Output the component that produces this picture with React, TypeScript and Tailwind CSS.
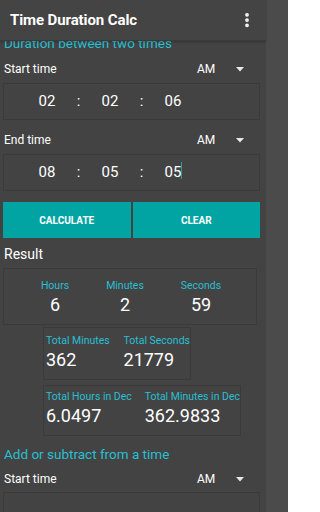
import { EllipsisVertical } from "lucide-react";

const cyan = "text-[#29bfd2]";

const Caret = () => (
  <svg width="8" height="5" viewBox="0 0 8 5" className="block">
    <path d="M0 0 H8 L4 4.5 Z" fill="#e8e8e8" />
  </svg>
);

const LabelRow = ({ label, className = "" }: { label: string; className?: string }) => (
  <div className={`flex items-center h-[14px] ${className}`}>
    <span className="pl-[1px] text-[12px] leading-[14px] text-white flex-1">{label}</span>
    <span className="w-[38px] text-[12px] leading-[14px] text-white">AM</span>
    <span className="w-[28px] pl-[1px]">
      <Caret />
    </span>
  </div>
);

const TimeBox = ({ h, m, s, cursor = false }: { h: string; m: string; s: string; cursor?: boolean }) => (
  <div className="h-[37px] w-[257px] border border-[#3a3a3a] flex items-center pl-[27px] text-[15px] text-white">
    <span className="w-[32px] text-center">{h}</span>
    <span className="w-[31px] text-center">:</span>
    <span className="w-[32px] text-center">{m}</span>
    <span className="w-[31px] text-center">:</span>
    <span className="w-[32px] text-center relative">
      {s}
      {cursor && <span className="absolute left-[24px] top-[1px] h-[17px] w-[1px] bg-[#14a3a3]" />}
    </span>
  </div>
);

const Stat = ({ label, value, className = "" }: { label: string; value: string; className?: string }) => (
  <div className={`whitespace-nowrap ${className}`}>
    <div className={`text-[10.5px] leading-[13px] ${cyan}`}>{label}</div>
    <div className="mt-[3px] text-[18px] leading-[20px] text-white">{value}</div>
  </div>
);

export default function App() {
  return (
    <div
      className="w-[288px] h-[512px] bg-[#4b4b4b] flex overflow-hidden"
      style={{ fontFamily: "Roboto, 'Liberation Sans', sans-serif" }}
    >
      <div className="w-[266px] h-full bg-[#434343] flex flex-col">
        {/* toolbar */}
        <div className="h-[41px] shrink-0 bg-[#444444] border-b border-[#3a3a3a] flex items-center justify-between pl-[10px] pr-[10px] relative z-10 shadow-[0_1px_2px_rgba(0,0,0,0.25)]">
          <span className="text-[15px] font-bold text-white leading-none tracking-[-0.1px]">Time Duration Calc</span>
          <EllipsisVertical className="w-[18px] h-[18px] text-white" strokeWidth={3} />
        </div>

        {/* scrolled content */}
        <div className="flex-1 overflow-hidden px-[3px]">
          <div className={`-mt-[5px] pl-[1px] text-[13.5px] leading-[14px] whitespace-nowrap ${cyan}`}>
            Duration between two times
          </div>

          <LabelRow label="Start time" className="mt-[12px]" />
          <div className="mt-[7px]">
            <TimeBox h="02" m="02" s="06" />
          </div>

          <LabelRow label="End time" className="mt-[13px]" />
          <div className="mt-[7px]">
            <TimeBox h="08" m="05" s="05" cursor />
          </div>

          <div className="mt-[11px] w-[257px] h-[36px] flex gap-[2px]">
            <button className="flex-1 bg-[#02a4a3] text-white text-[10px] font-bold">CALCULATE</button>
            <button className="flex-1 bg-[#02a4a3] text-white text-[10px] font-bold">CLEAR</button>
          </div>

          <div className="mt-[8px] pl-[1px] text-[14px] leading-[16px] text-white">Result</div>

          <div className="mt-[6px] w-[254px] h-[57px] border border-[#3a3a3a] flex pt-[10px] pl-[16px] text-center">
            <Stat label="Hours" value="6" className="w-[70px]" />
            <Stat label="Minutes" value="2" className="w-[70px]" />
            <Stat label="Seconds" value="59" className="w-[82px]" />
          </div>

          <div className="mt-[2px] ml-[40px] w-[148px] h-[53px] border border-[#3a3a3a] flex pt-[6px] pl-[2px]">
            <Stat label="Total Minutes" value="362" className="w-[78px]" />
            <Stat label="Total Seconds" value="21779" />
          </div>

          <div className="mt-[5px] ml-[40px] w-[198px] h-[51px] border border-[#3a3a3a] flex pt-[4px] pl-[2px]">
            <Stat label="Total Hours in Dec" value="6.0497" className="w-[99px]" />
            <Stat label="Total Minutes in Dec" value="362.9833" />
          </div>

          <div className={`mt-[10px] pl-[1px] text-[13.5px] leading-[16px] ${cyan}`}>Add or subtract from a time</div>

          <LabelRow label="Start time" className="mt-[10px]" />
          <div className="mt-[6px] h-[37px] w-[257px] border border-[#3a3a3a]" />
        </div>
      </div>
    </div>
  );
}
